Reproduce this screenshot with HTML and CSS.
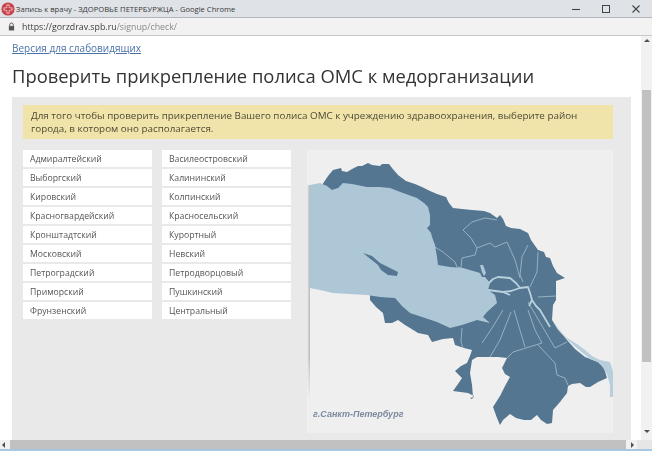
FILE: index.html
```html
<!DOCTYPE html>
<html lang="ru">
<head>
<meta charset="utf-8">
<title>Запись к врачу</title>
<link rel="stylesheet" href="styles.css">
</head>
<body>
<div class="window">
  <header class="titlebar">
    <svg class="favicon" viewBox="0 0 14 14"><circle cx="7" cy="7" r="6.6" fill="#c8414b"/><path d="M5.5 2.5h3v3h3v3h-3v3h-3v-3h-3v-3h3z" fill="#f4c9cc"/><path d="M6.3 3.5h1.4v2.8h2.8v1.4H7.700v2.800H6.300V7.700H3.500V6.300h2.800z" fill="#b8323c"/></svg>
    <span class="wintitle">Запись к врачу - ЗДОРОВЬЕ ПЕТЕРБУРЖЦА - Google Chrome</span>
    <div class="controls">
      <svg viewBox="0 0 10 10"><path d="M1 5.500h8" stroke="#444" stroke-width="1.100"/></svg>
      <svg viewBox="0 0 10 10"><rect x="1.500" y="1.500" width="7" height="7" fill="none" stroke="#444"/></svg>
      <svg viewBox="0 0 10 10"><path d="M1.500 1.500l7 7m0-7l-7 7" stroke="#444" stroke-width="1.100"/></svg>
    </div>
  </header>
  <div class="addressbar">
    <svg class="lock" viewBox="0 0 8 10"><path d="M2 4.500V3a2 2 0 0 1 4 0v1.500" fill="none" stroke="#555" stroke-width="1.100"/><rect x="1" y="4.500" width="6" height="5" fill="#555"/></svg>
    <span class="url"><span class="host">https://gorzdrav.spb.ru</span>/signup/check/</span>
  </div>
  <div class="viewport">
    <main class="page">
      <a class="access" href="#">Версия для слабовидящих</a>
      <h1>Проверить прикрепление полиса ОМС к медорганизации</h1>
      <section class="panel">
        <p class="hint">Для того чтобы проверить прикрепление Вашего полиса ОМС к учреждению здравоохранения, выберите район города, в котором оно располагается.</p>
        <div class="chooser">
          <ul class="districts">
            <li>Адмиралтейский</li><li>Василеостровский</li>
            <li>Выборгский</li><li>Калининский</li>
            <li>Кировский</li><li>Колпинский</li>
            <li>Красногвардейский</li><li>Красносельский</li>
            <li>Кронштадтский</li><li>Курортный</li>
            <li>Московский</li><li>Невский</li>
            <li>Петроградский</li><li>Петродворцовый</li>
            <li>Приморский</li><li>Пушкинский</li>
            <li>Фрунзенский</li><li>Центральный</li>
          </ul>
          <div class="map">
            <svg viewBox="307 150 306 283" width="306" height="283">
              <defs>
                <linearGradient id="edge" x1="0" x2="1" y1="0" y2="0"><stop offset="0" stop-color="#efefef"/><stop offset="1" stop-color="#b5b5b5"/></linearGradient>
                <linearGradient id="edgefade" x1="0" x2="0" y1="0" y2="1"><stop offset="0.800" stop-color="#fff"/><stop offset="1" stop-color="#000"/></linearGradient>
                <mask id="edgemask"><rect x="307" y="185" width="4" height="215" fill="url(#edgefade)"/></mask>
              </defs>
              <rect x="307" y="185" width="3" height="215" fill="url(#edge)" mask="url(#edgemask)"/>
              <path class="land" d="M322 185L328 176 333 170 341 168 342 171 347 172 352 169 358 166 362 166 368 163 372 165 380 166 382 164 389 164 392 168 398 175 406 181 415 184 422 187 430 191 437 194 446 197 449 203 453 208 462 209 472 210 484 211 490 213 497 218 500 215 503 219 506 226 511 228 520 229 528 233 531 240 538 250 544 252 546 257 550 258 553 266 557 273 565 278 556 281 556 300 553 305 552 320 558 329 567 340 575 349 585 357 598 362 604 368 607 378 598 382 590 387 586 387 580 383 572 384 568 386 567 393 560 402 553 410 552 423 547 424 541 420 537 415 531 420 524 420 516 418 510 414 503 420 500 425 497 418 493 407 500 396 505 386 510 377 505 374 502 368 505 362 507 358 498 357 488 357 477 357 472 360 470 373 472 385 473 397 470 398 472 399 474 396 468 393 453 391 458 384 462 378 455 371 461 366 467 363 470 356 472 350 464 348 455 345 453 338 443 339 432 342 428 335 418 333 410 328 405 325 398 320 392 323 385 323 383 313 376 307 370 300 370 295 390 290 345 230Z"/>
              <path class="gulf" d="M310 185L320 183 327 186 332 190 338 188 343 183 352 184 367 187 380 187 390 188 403 193 417 198 424 203 428 207 430 215 430 225 427 228 431 233 432 237 435 245 437 257 438 265 450 267 463 268 480 273 482 277 485 277 490 283 488 290 495 295 497 303 487 312 483 317 490 323 477 320 462 325 450 328 437 322 425 318 410 313 402 306 395 298 380 297 367 295 350 294 333 293 320 290 310 288Z"/>
              <path class="land" d="M363 253L372 256 380 263 388 267 398 272 397 276 388 275 381 270 378 265 368 257Z"/>
              <path class="water" d="M480 265l3 0 3 8-2 3-2-4Z"/>
              <path class="river" d="M489 283L493 279 498 277 510 278 516 283 520 288 528 287 531 296 532 300 536 306 540 310 550 327M488 290L503 292 511 291 520 288M503 292L510 295M532 300L529 306"/>
              <path class="shore" d="M553 322L560 331 567 338 577 344 585 350 592 356 600 360 610 362 613 371 613 397 610 397 610 385 607 374 600 363 590 359 578 349 568 340 558 330Z"/>
              <path class="border" d="M461 268L462 258 475 255 477 248 471 238 463 230 472 222 485 218 497 220M477 248L490 243 495 247 507 242 515 260 520 278M435 247L443 252 455 262 457 267 461 268M528 245L522 257 520 275 523 282M538 252L537 272 530 287M482 343L492 328 503 310M490 357L500 340 511 312M514 310L525 347M528 310L535 330 542 343M513 352L542 343M513 352L507 358M538 345L555 363 557 375 565 378 568 385M528 302L555 348 567 342M462 328L461 342 463 348M538 297L556 296"/>
              <path class="land-thin" d="M487 314L494 307"/>
            </svg>
            <span class="caption">г.Санкт-Петербург</span>
          </div>
        </div>
      </section>
    </main>
    <div class="vscroll">
      <span class="arrow up"></span>
      <span class="vthumb"></span>
      <span class="arrow down"></span>
    </div>
  </div>
  <div class="hscroll">
    <span class="arrow left"></span>
    <span class="hthumb"></span>
    <span class="arrow right"></span>
    <span class="corner"></span>
  </div>
  <div class="taskstrip"></div>
</div>
</body>
</html>
```
FILE: styles.css
```css
* { box-sizing: border-box; }
html, body { margin: 0; padding: 0; background: #fff; }
.window {
  width: 652px;
  height: 451px;
  display: flex;
  flex-direction: column;
  overflow: hidden;
  font-family: "Open Sans", "Noto Sans", sans-serif;
  filter: blur(0.35px);
}
.titlebar {
  height: 18px;
  flex: none;
  display: flex;
  align-items: center;
  background: #dfe2e7;
  border-bottom: 1px solid #b4b7ba;
}
.favicon { width: 14px; height: 14px; margin-left: 1px; flex: none; }
.wintitle { margin-left: 1px; font-size: 7.6px; color: #3a3a3a; white-space: nowrap; }
.controls { margin-left: auto; display: flex; gap: 20px; padding-right: 11px; }
.controls svg { width: 10px; height: 10px; display: block; }
.addressbar {
  height: 18px;
  flex: none;
  display: flex;
  align-items: center;
  background: #f2f2f2;
  border-bottom: 1px solid #c9c9c9;
}
.lock { width: 7px; height: 9px; margin-left: 8px; flex: none; }
.url { margin-left: 7px; font-size: 8.8px; color: #8a8a8a; white-space: nowrap; }
.host { color: #3c3c3c; }
.viewport { flex: 1; min-height: 0; display: flex; }
.page {
  width: 641px;
  flex: none;
  padding: 5px 10px 0 12px;
  display: flex;
  flex-direction: column;
  overflow: hidden;
  background: #fff;
}
.access {
  font-size: 10px;
  line-height: 14px;
  color: #4a72a8;
  text-decoration: underline;
}
h1 {
  margin: 7px 0 0;
  font-size: 18.4px;
  font-weight: 400;
  line-height: 27px;
  color: #333;
  white-space: nowrap;
}
.panel {
  margin-top: 8px;
  flex: 1;
  min-height: 0;
  padding: 8px 0 0 11px;
  background: #e9e9e9;
  overflow: hidden;
}
.hint {
  width: 590px;
  height: 34px;
  margin: 0;
  padding: 4px 8px 0;
  font-size: 9.85px;
  line-height: 13px;
  color: #4d4a35;
  background: #f1e4ab;
}
.chooser { margin-top: 11px; display: flex; }
.districts {
  list-style: none;
  margin: 0;
  padding: 0;
  width: 268px;
  flex: none;
  align-self: flex-start;
  display: grid;
  grid-template-columns: 129px 129px;
  column-gap: 10px;
  row-gap: 2px;
}
.districts li {
  height: 17px;
  padding-left: 7px;
  font-size: 8.7px;
  line-height: 18px;
  color: #555;
  background: #fff;
}
.map {
  position: relative;
  margin-left: 16px;
  width: 306px;
  height: 283px;
  flex: none;
  background: #efefef;
}
.map svg { display: block; }
.land { fill: #557690; }
.gulf, .water { fill: #adc7d7; }
.shore { fill: #b7cfdc; }
.river { fill: none; stroke: #b9d0de; stroke-width: 1.800; stroke-linejoin: round; }
.border { fill: none; stroke: #a5bfd2; stroke-width: 0.800; }
.land-thin { fill: none; stroke: #557690; stroke-width: 1.500; }
.caption {
  position: absolute;
  left: 6px;
  top: 259px;
  font-family: "Liberation Sans", sans-serif;
  font-size: 9px;
  font-style: italic;
  font-weight: 700;
  color: #7d8aa0;
  white-space: nowrap;
}
.vscroll {
  width: 11px;
  flex: none;
  display: flex;
  flex-direction: column;
  align-items: center;
  background: #f1f1f1;
}
.arrow { width: 0; height: 0; flex: none; border: 3px solid transparent; }
.arrow.up { margin-top: 3px; border-bottom-color: #505050; border-top-width: 0; }
.arrow.down { margin-top: 68px; border-top-color: #505050; border-bottom-width: 0; }
.vthumb { width: 9px; height: 272px; margin-top: 48px; flex: none; background: #c1c1c1; }
.hscroll {
  height: 9px;
  flex: none;
  display: flex;
  align-items: center;
  background: #f1f1f1;
}
.hthumb { width: 616px; height: 9px; margin-left: 5px; flex: none; background: #c1c1c1; }
.arrow.left { margin-left: 2px; border-right-color: #505050; border-left-width: 0; }
.arrow.right { margin-left: 5px; border-left-color: #505050; border-right-width: 0; }
.corner { flex: 1; align-self: stretch; margin-left: 3px; background: #e6e6e6; }
.taskstrip { height: 2px; flex: none; background: #a9c6e2; }
```
